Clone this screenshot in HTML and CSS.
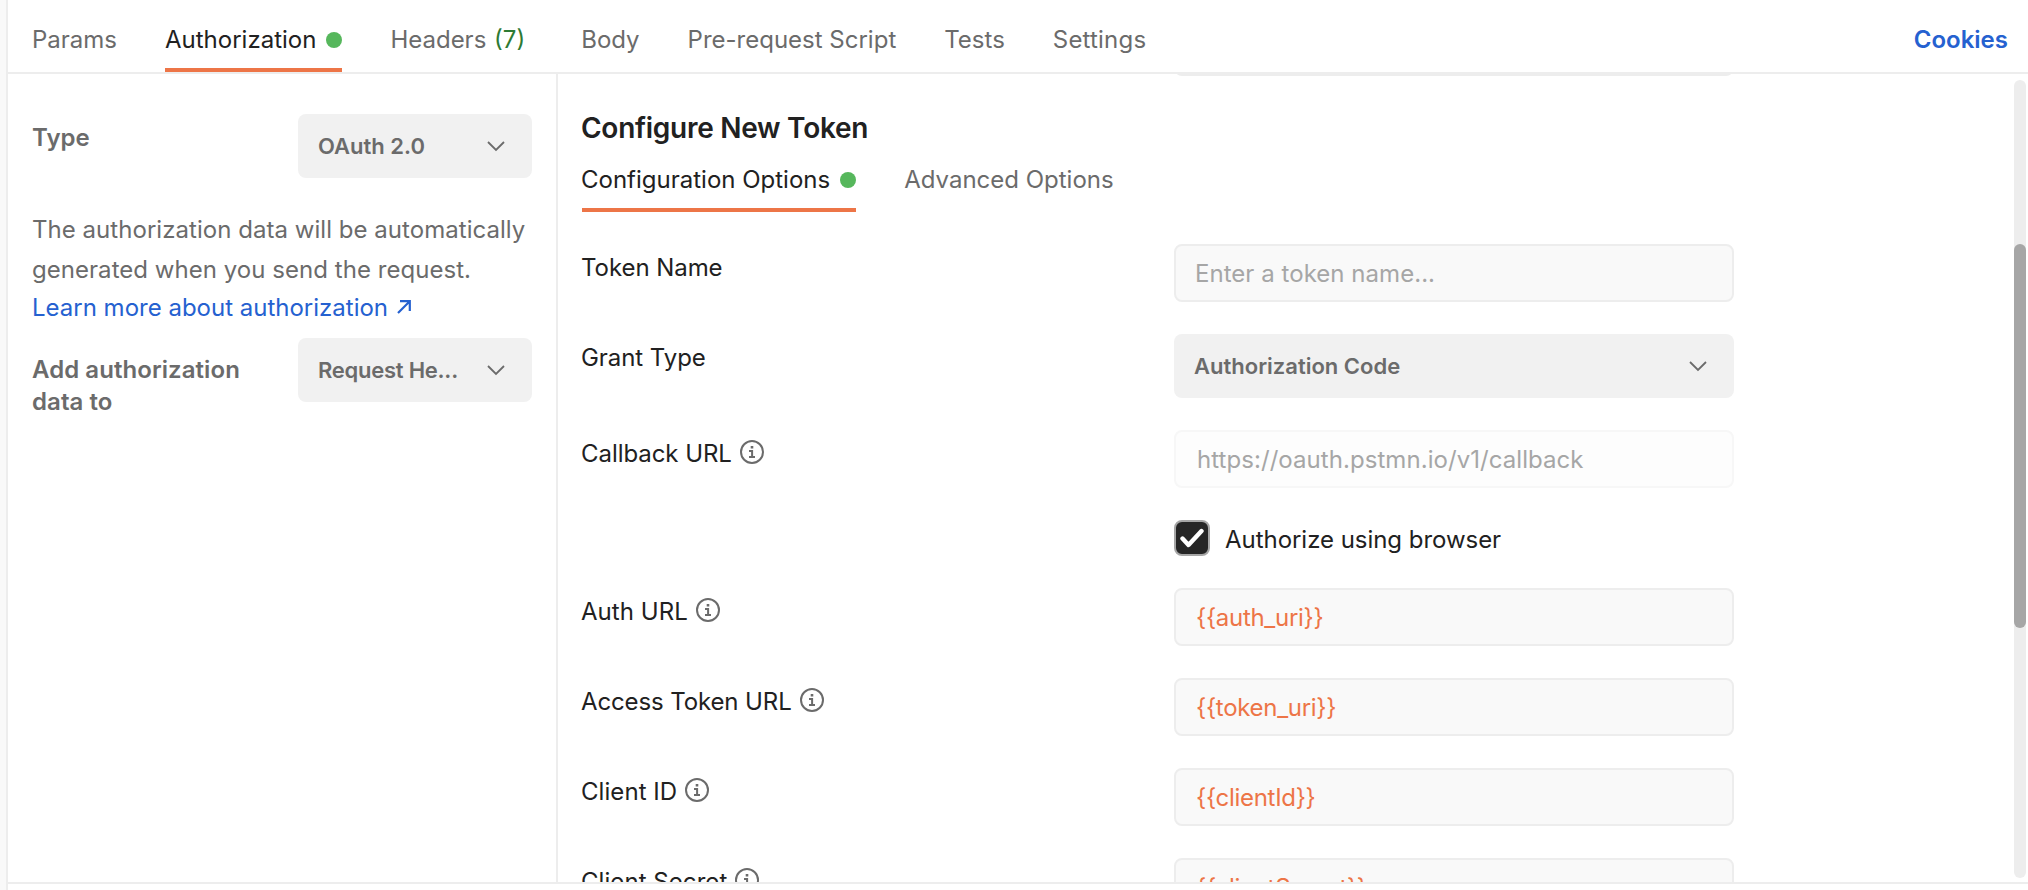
FILE: index.html
```html
<!DOCTYPE html>
<html lang="en">
<head>
<meta charset="utf-8">
<title>Request authorization</title>
<link rel="stylesheet" href="styles.css">
</head>
<body>
<svg class="sprite" aria-hidden="true">
  <symbol id="info" viewBox="0 0 24 24"><circle cx="12" cy="12" r="11" fill="none" stroke="currentColor" stroke-width="2"/><path d="M10.7 6h2.6v2.4h-2.6zM9 10h4.1v6H15v2H9v-2h2.1v-4H9z" fill="currentColor"/></symbol>
  <symbol id="chevron" viewBox="0 0 18 11"><path d="M1 1l8 8 8-8" fill="none" stroke="currentColor" stroke-width="1.8"/></symbol>
</svg>
<div class="app">
  <div class="rail"></div>
  <main class="main">
    <nav class="tabs">
      <a class="tab">Params</a>
      <a class="tab active">Authorization<i class="dot"></i></a>
      <a class="tab">Headers <span class="count">(7)</span></a>
      <a class="tab">Body</a>
      <a class="tab">Pre-request Script</a>
      <a class="tab">Tests</a>
      <a class="tab spaced">Settings</a>
      <a class="cookies">Cookies</a>
    </nav>
    <div class="content">
      <aside class="side">
        <div class="side-row">
          <div class="side-label">Type</div>
          <div class="select small"><span>OAuth 2.0</span><svg class="chevron"><use href="#chevron"/></svg></div>
        </div>
        <p class="note">The authorization data will be automatically generated when you send the request.</p>
        <a class="learn"><span>Learn more about authorization</span><svg class="arrow" viewBox="0 0 14 14"><path d="M1 13L12.5 1.5M3 1.2h9.8V11" fill="none" stroke="currentColor" stroke-width="2.2"/></svg></a>
        <div class="side-row second">
          <div class="side-label">Add authorization data to</div>
          <div class="select small"><span class="clipped">Request He...</span><svg class="chevron"><use href="#chevron"/></svg></div>
        </div>
      </aside>
      <section class="panel">
        <div class="row previous"><div></div><div class="input"></div></div>
        <h2 class="title">Configure New Token</h2>
        <div class="subtabs">
          <a class="subtab active">Configuration Options<i class="dot"></i></a>
          <a class="subtab">Advanced Options</a>
        </div>
        <div class="form">
          <div class="row"><div class="label">Token Name</div><div class="input placeholder">Enter a token name...</div></div>
          <div class="row"><div class="label">Grant Type</div><div class="select"><span>Authorization Code</span><svg class="chevron"><use href="#chevron"/></svg></div></div>
          <div class="row"><div class="label">Callback URL<svg class="info"><use href="#info"/></svg></div><div class="input disabled">https://oauth.pstmn.io/v1/callback</div></div>
          <div class="row"><div></div><div class="check"><span class="box"><svg class="tick" viewBox="0 0 24 20"><path d="M2.5 10.5l6 6.5L21.500 3" fill="none" stroke="#fff" stroke-width="4.400" stroke-linecap="round" stroke-linejoin="round"/></svg></span><span class="check-text">Authorize using browser</span></div></div>
          <div class="row"><div class="label short">Auth URL<svg class="info"><use href="#info"/></svg></div><div class="input variable">{{auth_uri}}</div></div>
          <div class="row"><div class="label long">Access Token URL<svg class="info"><use href="#info"/></svg></div><div class="input variable">{{token_uri}}</div></div>
          <div class="row"><div class="label short">Client ID<svg class="info"><use href="#info"/></svg></div><div class="input variable">{{clientId}}</div></div>
          <div class="row"><div class="label short">Client Secret<svg class="info"><use href="#info"/></svg></div><div class="input variable">{{clientSecret}}</div></div>
        </div>
      </section>
      <div class="scroll"><div class="thumb"></div></div>
    </div>
    <footer class="footer"></footer>
  </main>
</div>
</body>
</html>
```
FILE: styles.css
```css
* { box-sizing: border-box; }
body { margin: 0; background: #fff; color: #212121; font: 24px/40px Inter, "Liberation Sans", sans-serif; }
.sprite { display: none; }
.app { display: flex; width: 2028px; height: 890px; overflow: hidden; }
.rail { width: 8px; background: #f9f9f9; border-right: 2px solid #ededed; }
.main { flex: 1; display: flex; flex-direction: column; min-width: 0; }
.tabs { display: flex; height: 74px; padding: 0 20px 0 24px; gap: 48px; border-bottom: 2px solid #ededed; }
.tab, .cookies { display: flex; align-items: center; height: 72px; padding-top: 12px; border-bottom: 4px solid transparent; color: #6b6b6b; white-space: pre; }
.tab.active { color: #212121; border-color: #ed7547; }
.spaced { letter-spacing: 0.2px; }
.count { margin: 0 8px 0 1px; color: #2d7a33; }
.cookies { margin-left: auto; color: #2561d0; font-weight: 600; }
.dot { width: 16px; height: 16px; margin-left: 10px; border-radius: 50%; background: #56b75c; }
.content { display: flex; height: 808px; }
.side { width: 550px; padding: 40px 24px 0; border-right: 2px solid #ededed; color: #6b6b6b; }
.side-row { display: flex; justify-content: space-between; align-items: flex-start; }
.side-label { width: 230px; padding-top: 8px; font-weight: 600; line-height: 32px; letter-spacing: 0.06px; }
.second { margin-top: 12px; }
.second .side-label { padding-top: 16px; }
.note { width: 500px; margin: 32px 0 0; letter-spacing: 0.04px; }
.learn { display: flex; align-items: center; gap: 9px; height: 36px; color: #2561d0; }
.arrow { width: 14px; height: 14px; margin-top: -3px; }
.select { display: flex; align-items: center; justify-content: space-between; height: 64px; padding: 0 27px 0 20px; border-radius: 8px; background: #f1f1f1; color: #6b6b6b; font-size: 22px; font-weight: 600; }
.small { width: 234px; }
.clipped { letter-spacing: -0.25px; }
.chevron { width: 18px; height: 11px; }
.panel { flex: 1; padding: 0 0 0 24px; overflow: hidden; }
.row { display: grid; grid-template-columns: 592px 560px; }
.previous { margin-top: -56px; }
.title { margin: 30px 0 0; font-size: 28px; line-height: 44px; font-weight: 600; letter-spacing: -0.27px; text-indent: -1px; }
.subtabs { display: flex; gap: 48px; height: 62px; }
.subtab { display: flex; align-items: center; height: 62px; padding-top: 2px; border-bottom: 4px solid transparent; color: #6b6b6b; }
.subtab.active { color: #212121; border-color: #ed7547; text-indent: -1px; }
.form { display: grid; gap: 32px; padding-top: 32px; }
.label { display: flex; align-items: center; height: 40px; margin-top: 4px; text-indent: -1px; letter-spacing: -0.06px; }
.short { letter-spacing: 0.06px; }
.long { letter-spacing: -0.12px; }
.info { width: 24px; height: 24px; margin: -5px 0 0 8px; color: #6b6b6b; }
.input { height: 58px; padding: 8px 20px 6px; border: 2px solid #ededed; border-radius: 8px; background: #f9f9f9; }
.placeholder { padding-left: 19px; color: #a6a6a6; letter-spacing: 0.04px; }
.disabled { padding-left: 21px; border-color: #f7f7f7; background: #fdfdfd; color: #a6a6a6; letter-spacing: 0.06px; }
.variable { color: #ed7547; letter-spacing: -0.3px; }
.check { display: flex; align-items: center; gap: 15px; height: 36px; }
.box { display: flex; align-items: center; justify-content: center; width: 36px; height: 36px; border: 2px solid #a6a6a6; border-radius: 8px; background: #262626; }
.tick { width: 24px; height: 20px; }
.check-text { padding-top: 3px; letter-spacing: -0.04px; }
.scroll { width: 12px; height: 798px; margin: 6px 2px 0 0; padding-top: 164px; border-radius: 6px; background: #ededed; }
.thumb { height: 384px; border-radius: 6px; background: #a6a6a6; }
.footer { height: 8px; border-top: 2px solid #ededed; }
```
